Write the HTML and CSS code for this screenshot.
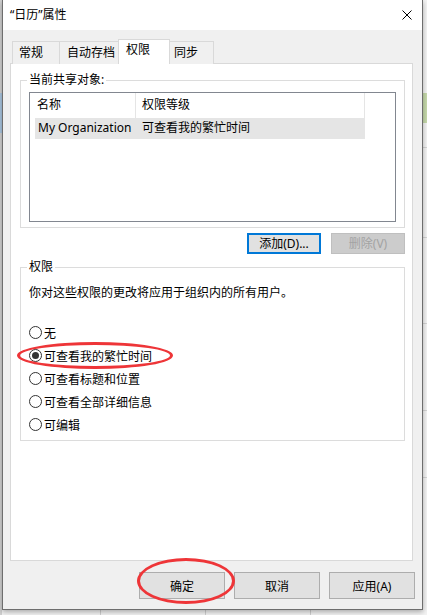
FILE: index.html
```html
<!DOCTYPE html>
<html lang="zh-CN">
<head>
<meta charset="utf-8">
<title>“日历”属性</title>
<link rel="stylesheet" href="styles.css">
</head>
<body>
<div class="dialog">
  <div class="titlebar">
    <span class="title">“日历”属性</span>
    <svg class="close" viewBox="0 0 10 10" width="10" height="10"><path d="M0.5 0.5L9.5 9.5M9.5 0.5L0.5 9.5" stroke="#000" stroke-width="1" fill="none"/></svg>
  </div>
  <div class="main">
    <div class="tabs">
      <div class="tab w1">常规</div>
      <div class="tab w2">自动存档</div>
      <div class="tab active w3">权限</div>
      <div class="tab w4">同步</div>
    </div>
    <div class="pane">
      <fieldset class="group g1">
        <legend>当前共享对象:</legend>
        <div class="listbox">
          <div class="lv-head">
            <div class="col c1">名称</div>
            <div class="col c2">权限等级</div>
          </div>
          <div class="lv-row">
            <span class="r1">My Organization</span>
            <span class="r2">可查看我的繁忙时间</span>
          </div>
        </div>
      </fieldset>
      <div class="btnrow">
        <button class="btn small focused">添加(D)...</button>
        <button class="btn small disabled">删除(V)</button>
      </div>
      <fieldset class="group g2">
        <legend>权限</legend>
        <p class="note">你对这些权限的更改将应用于组织内的所有用户。</p>
        <div class="radios">
          <label class="opt"><span class="radio"></span>无</label>
          <label class="opt"><span class="radio checked"></span>可查看我的繁忙时间</label>
          <label class="opt"><span class="radio"></span>可查看标题和位置</label>
          <label class="opt"><span class="radio"></span>可查看全部详细信息</label>
          <label class="opt"><span class="radio"></span>可编辑</label>
        </div>
      </fieldset>
    </div>
    <div class="actions">
      <button class="btn big">确定</button>
      <button class="btn big">取消</button>
      <button class="btn big">应用(A)</button>
    </div>
  </div>
  <div class="ring ring1"></div>
  <div class="ring ring2"></div>
</div>
</body>
</html>
```
FILE: styles.css
```css
* { box-sizing: border-box; }

html, body {
  margin: 0;
  padding: 0;
}

body {
  width: 427px;
  height: 615px;
  overflow: hidden;
  font-family: "Noto Sans", "Noto Sans CJK SC", sans-serif;
  font-size: 12px;
  color: #000;
  background:
    linear-gradient(#a9c6e0, #a9c6e0) 0 93px / 2px 40px no-repeat,
    linear-gradient(#c6d9aa, #c6d9aa) 423px 93px / 4px 30px no-repeat,
    linear-gradient(#d4d4d4, #d4d4d4) 423px 147px / 4px 1px no-repeat,
    linear-gradient(#d4d4d4, #d4d4d4) 423px 237px / 4px 1px no-repeat,
    linear-gradient(#d4d4d4, #d4d4d4) 423px 323px / 4px 1px no-repeat,
    linear-gradient(#d4d4d4, #d4d4d4) 423px 410px / 4px 1px no-repeat,
    linear-gradient(#d4d4d4, #d4d4d4) 423px 477px / 4px 1px no-repeat,
    linear-gradient(#cfcfcf, #cfcfcf) 100px 610px / 1px 5px no-repeat,
    linear-gradient(#cfcfcf, #cfcfcf) 205px 610px / 1px 5px no-repeat,
    linear-gradient(#cfcfcf, #cfcfcf) 310px 610px / 1px 5px no-repeat,
    linear-gradient(#d0d0d0, #d0d0d0) 0 0 / 2px 615px no-repeat,
    #f3f3f3;
}

.dialog {
  position: relative;
  margin-left: 2px;
  width: 421px;
  height: 610px;
  border: 1px solid #6e6e6e;
  border-top: 0;
  background: #f0f0f0;
  box-shadow: 0 2px 5px rgba(0, 0, 0, 0.3);
}

.titlebar {
  height: 30px;
  background: #fff;
  display: flex;
  align-items: center;
  justify-content: space-between;
  padding: 0 10px 0 7px;
}

.title {
  line-height: 16px;
}

.close {
  display: block;
  margin-top: -1px;
}

.main {
  padding: 9px 0 0 7px;
}

.tabs {
  display: flex;
  align-items: flex-end;
  height: 25px;
  margin-bottom: -1px;
  padding-left: 2px;
}

.tab {
  height: 23px;
  border: 1px solid #d9d9d9;
  border-bottom: 0;
  background: #f0f0f0;
  padding-left: 6px;
  line-height: 21px;
  margin-left: -1px;
  white-space: nowrap;
}

.tab.w1 { width: 48px; margin-left: 0; }
.tab.w2 { width: 60px; padding-left: 7px; }
.tab.w3 { width: 52px; padding-left: 7px; }
.tab.w4 { width: 45px; padding-left: 4px; }

.tab.active {
  height: 25px;
  background: #fff;
  position: relative;
  z-index: 1;
  line-height: 20px;
}

.pane {
  width: 403px;
  height: 498px;
  border: 1px solid #d9d9d9;
  background: #fff;
  padding: 0 7px 0 9px;
}

.group {
  margin: 8px 0 0;
  border: 1px solid #dcdcdc;
  min-width: 0;
}

.group legend {
  padding: 0 2px;
  margin-left: -2px;
  line-height: 16px;
  height: 16px;
}

.g1 {
  padding: 4px 8px 5px;
}

.listbox {
  height: 130px;
  border: 1px solid #828790;
  background: #fff;
}

.lv-head {
  display: flex;
  height: 25px;
}

.col {
  height: 25px;
  line-height: 24px;
  border-right: 1px solid #e5e5e5;
  white-space: nowrap;
}

.c1 {
  width: 106px;
  padding-left: 7px;
}

.c2 {
  width: 229px;
  padding-left: 6px;
}

.lv-row {
  display: flex;
  margin-left: 5px;
  width: 330px;
  height: 21px;
  line-height: 20px;
  background: #e5e5e5;
}

.r1 {
  width: 100px;
  padding-left: 3px;
  white-space: nowrap;
}

.r2 {
  padding-left: 7px;
  white-space: nowrap;
}

.btnrow {
  display: flex;
  justify-content: flex-end;
  gap: 10px;
  margin-top: 5px;
}

.btn {
  font: inherit;
  color: #000;
  background: #e1e1e1;
  border: 1px solid #adadad;
  padding: 0;
  margin: 0;
  text-align: center;
  white-space: nowrap;
}

.btn.small {
  width: 74px;
  height: 21px;
  line-height: 17px;
}

.btn.focused {
  border: 2px solid #0078d7;
}

.btn.disabled {
  background: #cccccc;
  border-color: #bfbfbf;
  color: #a3a3a3;
}

.g2 {
  margin-top: 5px;
  padding: 10px 8px 4px;
}

.note {
  margin: 0;
  line-height: 16px;
}

.radios {
  margin-top: 20px;
}

.opt {
  display: flex;
  align-items: center;
  height: 23px;
}

.radio {
  width: 13px;
  height: 13px;
  border: 1px solid #333;
  border-radius: 50%;
  background: #fff;
  margin-right: 2px;
  display: flex;
  align-items: center;
  justify-content: center;
}

.radio.checked::after {
  content: "";
  width: 7px;
  height: 7px;
  border-radius: 50%;
  background: #333;
}

.actions {
  display: flex;
  justify-content: flex-end;
  gap: 9px;
  margin-top: 11px;
  padding-right: 7px;
}

.btn.big {
  width: 86px;
  height: 27px;
}

.ring {
  position: absolute;
  border: 3px solid #ee3538;
  border-radius: 50%;
  pointer-events: none;
}

.ring1 {
  left: 14px;
  top: 342px;
  width: 156px;
  height: 27px;
}

.ring2 {
  left: 134px;
  top: 558px;
  width: 98px;
  height: 46px;
}
```
